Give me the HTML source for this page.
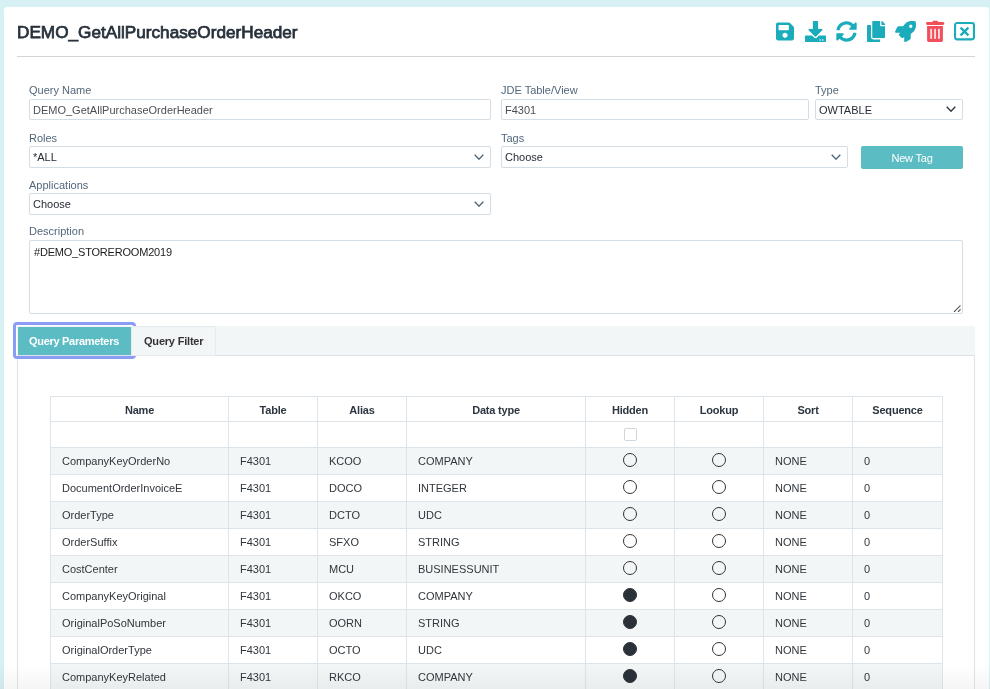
<!DOCTYPE html>
<html><head><meta charset="utf-8">
<style>
*{box-sizing:border-box;margin:0;padding:0}
html,body{width:990px;height:689px;overflow:hidden;background:#d7f0f4;font-family:"Liberation Sans",sans-serif;-webkit-font-smoothing:antialiased}
.card{position:absolute;left:4px;top:7px;width:985px;height:720px;background:#fff;border-radius:3px;}
.abs{position:absolute}
.title{position:absolute;left:17.3px;top:23px;font-size:17px;font-weight:400;-webkit-text-stroke:0.75px #27313b;transform-origin:0 0;transform:scaleX(1.01);color:#27313b;white-space:nowrap;line-height:20px}
.hr{position:absolute;left:17px;top:56px;width:958px;height:1px;background:#d4d4d4}
.lbl{position:absolute;font-size:11px;color:#53677b;line-height:13px;white-space:nowrap}
.inp{position:absolute;height:21px;border:1px solid #d5dde4;border-radius:2px;background:#fff;font-size:11px;color:#333;line-height:21px;padding-left:3px;white-space:nowrap}
.chev{position:absolute;top:6px;width:10px;height:6px}
.btn{position:absolute;left:861px;top:146px;width:102px;height:23px;background:#5bbcc4;border-radius:2px;color:#fff;font-size:11px;line-height:25px;letter-spacing:-0.2px;text-align:center}
.ta{position:absolute;left:29px;top:240px;width:934px;height:74px;border:1px solid #d5dde4;border-radius:2px;font-size:11px;color:#1c1c1c;padding:4px 0 0 4px;line-height:14px;letter-spacing:-0.2px}
.tabs{position:absolute;left:17px;top:326px;width:958px;height:29px;background:#f3f6f7}
.tab1{position:absolute;left:18px;top:327px;width:113px;height:28px;background:#5bbcc4;color:#fff;font-weight:700;font-size:11px;line-height:28px;padding-left:11px;letter-spacing:-0.3px;white-space:nowrap}
.ring{position:absolute;left:13px;top:322px;width:123px;height:37px;border:3px solid #8a9cf6;border-radius:4px}
.tab2{position:absolute;left:131px;top:326px;width:85px;height:30px;border:1px solid #e4eaee;background:#f3f6f7;z-index:2;letter-spacing:-0.2px;color:#333;font-weight:700;font-size:11px;line-height:28px;padding-left:12px;white-space:nowrap}
.content{position:absolute;left:17px;top:355px;width:958px;height:400px;border:1px solid #dde4e9;border-right-width:1px}
table{position:absolute;left:50px;top:396px;border-collapse:collapse;table-layout:fixed;font-size:11px;color:#30363c}
td,th{border:1px solid #dde4ea;height:27px;padding:0 0 0 11px;white-space:nowrap;text-align:left}
th{height:25px;text-align:center;padding:2px 0 0 0;letter-spacing:-0.2px;font-weight:700;color:#2d3640}
tr.f td{height:26px}
tr.s td{background:#f3f6f7}
td.c{text-align:center;padding:0}
.r{display:inline-block;width:14px;height:14px;border:1.3px solid #333;border-radius:50%;vertical-align:middle;margin-top:-3px}
.r.on{background:#2a3138;border-color:#2a3138}
.cb{display:inline-block;width:13px;height:13px;border:1px solid #cfd6dc;border-radius:2px;vertical-align:middle}
.shade{position:absolute;left:0;top:664px;width:990px;height:25px;background:linear-gradient(rgba(0,0,0,0),rgba(0,0,0,0.04))}
</style></head>
<body><div id="wrap" style="position:absolute;left:0;top:0;width:990px;height:689px;will-change:transform">
<div class="card"></div>
<div class="title">DEMO_GetAllPurchaseOrderHeader</div>
<div class="hr"></div>

<!-- icons -->
<svg class="abs" style="left:776px;top:22px" width="18" height="19" viewBox="0 32 448 448"><path fill="#1aacba" d="M433.941 129.941l-83.882-83.882A48 48 0 0 0 316.118 32H48C21.49 32 0 53.49 0 80v352c0 26.51 21.49 48 48 48h352c26.51 0 48-21.49 48-48V163.882a48 48 0 0 0-14.059-33.941zM224 416c-35.346 0-64-28.654-64-64 0-35.346 28.654-64 64-64s64 28.654 64 64c0 35.346-28.654 64-64 64zm96-304.52V212c0 6.627-5.373 12-12 12H76c-6.627 0-12-5.373-12-12V108c0-6.627 5.373-12 12-12h228.52c3.183 0 6.235 1.264 8.485 3.515l3.48 3.48A11.996 11.996 0 0 1 320 111.48z"/></svg>
<svg class="abs" style="left:805px;top:21px" width="21" height="21" viewBox="0 0 512 512"><path fill="#1aacba" d="M216 0h80c13.3 0 24 10.7 24 24v168h87.7c17.8 0 26.7 21.5 14.1 34.1L269.7 378.3c-7.5 7.5-19.8 7.5-27.3 0L90.1 226.1c-12.6-12.6-3.7-34.1 14.1-34.1H192V24c0-13.3 10.7-24 24-24zm296 376v112c0 13.3-10.7 24-24 24H24c-13.3 0-24-10.7-24-24V376c0-13.3 10.7-24 24-24h146.7l49 49c20.1 20.1 52.5 20.1 72.6 0l49-49H488c13.3 0 24 10.7 24 24zm-124 88c0-11-9-20-20-20s-20 9-20 20 9 20 20 20 20-9 20-20zm64 0c0-11-9-20-20-20s-20 9-20 20 9 20 20 20 20-9 20-20z"/></svg>
<svg class="abs" style="left:836px;top:21px" width="21" height="21" viewBox="0 0 512 512"><path fill="#1aacba" d="M370.72 133.28C339.458 104.008 298.888 87.962 255.848 88c-77.458.068-144.328 53.178-162.791 126.85-1.344 5.363-6.122 9.15-11.651 9.15H24.103c-7.498 0-13.194-6.807-11.807-14.176C33.933 94.924 134.813 8 256 8c66.448 0 126.791 26.136 171.315 68.685L463.03 40.97C478.149 25.851 504 36.559 504 57.941V192c0 13.255-10.745 24-24 24H345.941c-21.382 0-32.090-25.851-16.971-40.971l41.75-41.749zM32 296h134.059c21.382 0 32.090 25.851 16.971 40.971l-41.75 41.75c31.262 29.273 71.835 45.319 114.876 45.280 77.418-.07 144.315-53.144 162.787-126.849 1.344-5.363 6.122-9.15 11.651-9.15h57.304c7.498 0 13.194 6.807 11.807 14.176C478.067 417.076 377.187 504 256 504c-66.448 0-126.791-26.136-171.315-68.685L48.970 471.030C33.851 486.149 8 475.441 8 454.059V320c0-13.255 10.745-24 24-24z"/></svg>
<svg class="abs" style="left:867px;top:21px" width="18.4" height="21" viewBox="0 0 448 512"><path fill="#1aacba" d="M320 448v40c0 13.255-10.745 24-24 24H24c-13.255 0-24-10.745-24-24V120c0-13.255 10.745-24 24-24h72v296c0 30.879 25.121 56 56 56h168zm0-344V0H152c-13.255 0-24 10.745-24 24v368c0 13.255 10.745 24 24 24h272c13.255 0 24-10.745 24-24V128H344c-13.2 0-24-10.8-24-24zm120.971-31.029L375.029 7.029A24 24 0 0 0 358.059 0H352v96h96v-6.059a24 24 0 0 0-7.029-16.970z"/></svg>
<svg class="abs" style="left:895px;top:21px" width="21" height="21" viewBox="0 0 512 512"><path fill="#1aacba" d="M505.12 19.09c-1.19-5.53-6.66-11-12.21-12.19C460.72 0 435.51 0 410.41 0 307.18 0 245.27 55.2 199.05 128H94.84c-16.35.02-35.56 11.88-42.89 26.48L2.52 253.3A28.4 28.4 0 0 0 0 264a24 24 0 0 0 24.01 24h103.81l-22.47 22.47c-11.37 11.36-13 32.26 0 45.25l50.9 50.91c11.16 11.19 32.16 13.16 45.28 0l22.47-22.47V488a24 24 0 0 0 24.01 24 28.56 28.56 0 0 0 10.71-2.52l98.73-49.39c14.63-7.3 26.51-26.5 26.51-42.86V312.8c72.6-46.31 128.03-108.41 128.03-211.09.01-25.2.01-50.41-6.95-82.62zM384.04 168a40 40 0 1 1 40.01-40 40.02 40.02 0 0 1-40.01 40z"/></svg>
<svg class="abs" style="left:922px;top:18px" width="26" height="26" viewBox="0 0 26 26"><g fill="#f04f5b"><rect x="4" y="4.1" width="18.3" height="2.9" rx="1.4"/><path d="M10.2 4.4L11 2.8H15.6L16.4 4.4Z"/><path d="M5.1 7.9H20.9V22.3A1.6 1.6 0 0 1 19.3 23.9H6.7A1.6 1.6 0 0 1 5.1 22.3Z"/></g><g fill="#fcd9dc"><rect x="8.2" y="10.8" width="1.9" height="10.1"/><rect x="12.1" y="10.8" width="1.9" height="10.1"/><rect x="16" y="10.8" width="1.9" height="10.1"/></g></svg>
<svg class="abs" style="left:954px;top:22px" width="21" height="19" viewBox="0 0 21 19"><rect x="1.05" y="1.05" width="18.9" height="16.3" rx="2" fill="none" stroke="#1aacba" stroke-width="2.1"/><path d="M6.6 5.6l7.8 7.8M14.4 5.6l-7.8 7.8" stroke="#1aacba" stroke-width="2.3"/></svg>

<!-- form -->
<div class="lbl" style="left:29px;top:84px">Query Name</div>
<div class="inp" style="left:29px;top:99px;width:462px;color:#4b4f53">DEMO_GetAllPurchaseOrderHeader</div>
<div class="lbl" style="left:501px;top:84px">JDE Table/View</div>
<div class="inp" style="left:501px;top:99px;width:308px;color:#4b4f53">F4301</div>
<div class="lbl" style="left:815px;top:84px">Type</div>
<div class="inp" style="left:815px;top:99px;width:148px;color:#262d35">OWTABLE<svg class="chev" style="left:130px" viewBox="0 0 10 6"><path d="M0.7 0.7L5 5.2 9.3 0.7" fill="none" stroke="#2d3540" stroke-width="1.4"/></svg></div>

<div class="lbl" style="left:29px;top:132px">Roles</div>
<div class="inp" style="left:29px;top:146px;width:462px;height:22px;color:#262d35">*ALL<svg class="chev" style="left:444px;top:7px" viewBox="0 0 10 6"><path d="M0.7 0.7L5 5.2 9.3 0.7" fill="none" stroke="#4f6377" stroke-width="1.3"/></svg></div>
<div class="lbl" style="left:501px;top:132px">Tags</div>
<div class="inp" style="left:501px;top:146px;width:347px;height:22px;color:#262d35">Choose<svg class="chev" style="left:329px;top:7px" viewBox="0 0 10 6"><path d="M0.7 0.7L5 5.2 9.3 0.7" fill="none" stroke="#4f6377" stroke-width="1.3"/></svg></div>
<div class="btn">New Tag</div>

<div class="lbl" style="left:29px;top:179px">Applications</div>
<div class="inp" style="left:29px;top:193px;width:462px;height:22px;color:#262d35">Choose<svg class="chev" style="left:444px;top:7px" viewBox="0 0 10 6"><path d="M0.7 0.7L5 5.2 9.3 0.7" fill="none" stroke="#4f6377" stroke-width="1.3"/></svg></div>

<div class="lbl" style="left:29px;top:225px">Description</div>
<div class="ta">#DEMO_STOREROOM2019</div>
<svg class="abs" style="left:948px;top:298px" width="20" height="20" viewBox="0 0 20 20"><path d="M6.4 13.5L12.5 7.4M10.4 13.5L12.5 11.4" stroke="#4d4d4d" stroke-width="1.1" stroke-linecap="round" stroke-dasharray="0.9 0.9" fill="none"/></svg>

<!-- tabs -->
<div class="tabs"></div>
<div class="content"></div>
<div class="tab2">Query Filter</div>
<div class="tab1">Query Parameters</div>
<div class="ring"></div>

<table>
<colgroup><col style="width:178px"><col style="width:89px"><col style="width:89px"><col style="width:179px"><col style="width:89px"><col style="width:89px"><col style="width:89px"><col style="width:90px"></colgroup>
<tr><th>Name</th><th>Table</th><th>Alias</th><th>Data type</th><th>Hidden</th><th>Lookup</th><th>Sort</th><th>Sequence</th></tr>
<tr class="f"><td></td><td></td><td></td><td></td><td class="c"><span class="cb"></span></td><td></td><td></td><td></td></tr>
<tr class="s"><td>CompanyKeyOrderNo</td><td>F4301</td><td>KCOO</td><td>COMPANY</td><td class="c"><span class="r"></span></td><td class="c"><span class="r"></span></td><td>NONE</td><td>0</td></tr>
<tr><td>DocumentOrderInvoiceE</td><td>F4301</td><td>DOCO</td><td>INTEGER</td><td class="c"><span class="r"></span></td><td class="c"><span class="r"></span></td><td>NONE</td><td>0</td></tr>
<tr class="s"><td>OrderType</td><td>F4301</td><td>DCTO</td><td>UDC</td><td class="c"><span class="r"></span></td><td class="c"><span class="r"></span></td><td>NONE</td><td>0</td></tr>
<tr><td>OrderSuffix</td><td>F4301</td><td>SFXO</td><td>STRING</td><td class="c"><span class="r"></span></td><td class="c"><span class="r"></span></td><td>NONE</td><td>0</td></tr>
<tr class="s"><td>CostCenter</td><td>F4301</td><td>MCU</td><td>BUSINESSUNIT</td><td class="c"><span class="r"></span></td><td class="c"><span class="r"></span></td><td>NONE</td><td>0</td></tr>
<tr><td>CompanyKeyOriginal</td><td>F4301</td><td>OKCO</td><td>COMPANY</td><td class="c"><span class="r on"></span></td><td class="c"><span class="r"></span></td><td>NONE</td><td>0</td></tr>
<tr class="s"><td>OriginalPoSoNumber</td><td>F4301</td><td>OORN</td><td>STRING</td><td class="c"><span class="r on"></span></td><td class="c"><span class="r"></span></td><td>NONE</td><td>0</td></tr>
<tr><td>OriginalOrderType</td><td>F4301</td><td>OCTO</td><td>UDC</td><td class="c"><span class="r on"></span></td><td class="c"><span class="r"></span></td><td>NONE</td><td>0</td></tr>
<tr class="s"><td>CompanyKeyRelated</td><td>F4301</td><td>RKCO</td><td>COMPANY</td><td class="c"><span class="r on"></span></td><td class="c"><span class="r"></span></td><td>NONE</td><td>0</td></tr>
</table>
<div class="shade"></div>
</div></body></html>
